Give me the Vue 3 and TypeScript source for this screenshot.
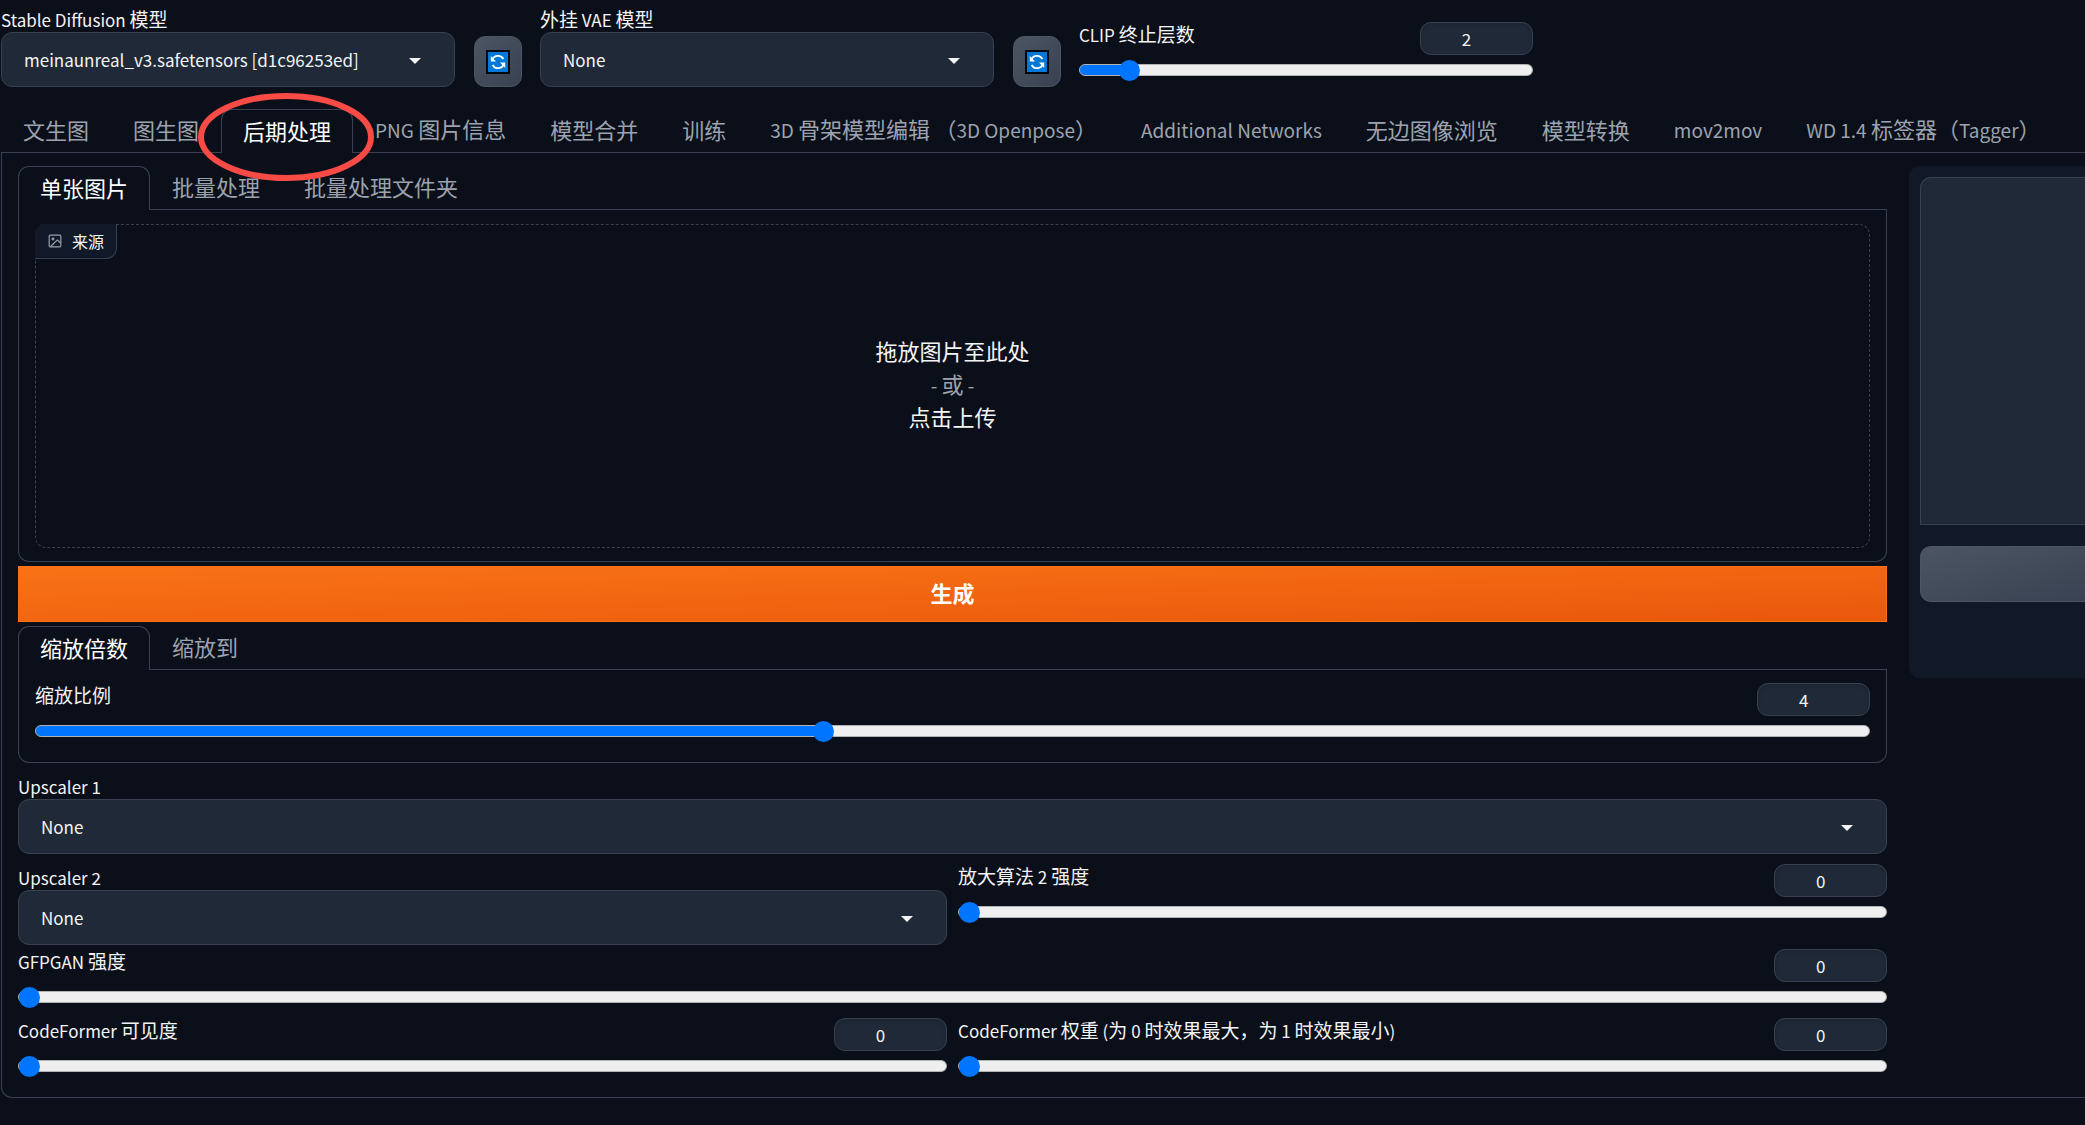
<script setup lang="ts">
import { h, reactive, ref } from 'vue'

interface SliderSpec {
  id: string
  label: string
  value: number
  min: number
  max: number
  step: number
}

const mainTabs = [
  '文生图', '图生图', '后期处理', 'PNG 图片信息', '模型合并', '训练',
  '3D 骨架模型编辑 （3D Openpose）', 'Additional Networks', '无边图像浏览',
  '模型转换', 'mov2mov', 'WD 1.4 标签器（Tagger）',
]
const sourceTabs = ['单张图片', '批量处理', '批量处理文件夹']
const scaleTabs = ['缩放倍数', '缩放到']

const activeMain = ref(2)
const activeSource = ref(0)
const activeScale = ref(0)

const sliders = reactive<Record<string, SliderSpec>>({
  clip: { id: 'clip', label: 'CLIP 终止层数', value: 2, min: 1, max: 12, step: 1 },
  resize: { id: 'resize', label: '缩放比例', value: 4, min: 1, max: 8, step: 0.05 },
  up2: { id: 'up2', label: '放大算法 2 强度', value: 0, min: 0, max: 1, step: 0.001 },
  gfpgan: { id: 'gfpgan', label: 'GFPGAN 强度', value: 0, min: 0, max: 1, step: 0.001 },
  cfVis: { id: 'cf-vis', label: 'CodeFormer 可见度', value: 0, min: 0, max: 1, step: 0.001 },
  cfWeight: { id: 'cf-weight', label: 'CodeFormer 权重 (为 0 时效果最大，为 1 时效果最小)', value: 0, min: 0, max: 1, step: 0.001 },
})

const fill = (s: SliderSpec) => {
  const f = (s.value - s.min) / (s.max - s.min)
  return { '--fill': `calc(${f} * (100% - 21px) + 10px)` }
}

// Mixed-script text: Latin runs are set a little smaller than the Chinese around them.
const Mixed = (props: { text: string }) =>
  h('span', { class: 'mixed' }, props.text.split(/([\x20-\x7e]+)/).filter(Boolean).map(
    part => /^[\x20-\x7e]+$/.test(part) ? h('span', { class: 'latin' }, part) : part,
  ))
Mixed.props = ['text']
</script>

<template>
  <div class="app">
    <header class="quick">
      <div class="field quick-select">
        <label for="ckpt"><Mixed text="Stable Diffusion 模型" /></label>
        <div class="select">
          <select id="ckpt"><option>meinaunreal_v3.safetensors [d1c96253ed]</option></select>
          <svg class="caret" viewBox="0 0 12 6"><path d="M0 0h12L6 6z" /></svg>
        </div>
      </div>
      <button class="refresh" type="button" aria-label="刷新模型">
        <svg viewBox="0 0 24 24">
          <rect x="1" y="1" width="22" height="22" fill="#0078d7" stroke="#05090f" stroke-width="2" />
          <path d="M6 10.5A6.2 6.2 0 0 1 17.4 9M18 13.5A6.2 6.2 0 0 1 6.6 15" fill="none" stroke="#fff" stroke-width="1.8" />
          <path d="M4.8 6v5.4h5.2zM19.2 18v-5.4h-5.2z" fill="#fff" />
        </svg>
      </button>
      <div class="field quick-select">
        <label for="vae"><Mixed text="外挂 VAE 模型" /></label>
        <div class="select">
          <select id="vae"><option>None</option></select>
          <svg class="caret" viewBox="0 0 12 6"><path d="M0 0h12L6 6z" /></svg>
        </div>
      </div>
      <button class="refresh" type="button" aria-label="刷新 VAE">
        <svg viewBox="0 0 24 24">
          <rect x="1" y="1" width="22" height="22" fill="#0078d7" stroke="#05090f" stroke-width="2" />
          <path d="M6 10.5A6.2 6.2 0 0 1 17.4 9M18 13.5A6.2 6.2 0 0 1 6.6 15" fill="none" stroke="#fff" stroke-width="1.8" />
          <path d="M4.8 6v5.4h5.2zM19.2 18v-5.4h-5.2z" fill="#fff" />
        </svg>
      </button>
      <div class="slider quick-slider">
        <div class="slider-head">
          <label for="clip"><Mixed :text="sliders.clip.label" /></label>
          <input v-model.number="sliders.clip.value" class="num" type="text" :aria-label="sliders.clip.label">
        </div>
        <input id="clip" v-model.number="sliders.clip.value" type="range" :min="sliders.clip.min" :max="sliders.clip.max" :step="sliders.clip.step" :style="fill(sliders.clip)">
      </div>
    </header>

    <nav class="tabs main-tabs">
      <button v-for="(t, i) in mainTabs" :key="t" type="button" class="tab" :class="{ active: i === activeMain }" @click="activeMain = i">
        <Mixed :text="t" />
        <svg v-if="i === 2" class="ring" viewBox="0 0 176 88"><ellipse cx="88" cy="44" rx="85" ry="41" /></svg>
      </button>
    </nav>

    <main class="page">
      <section class="left">
        <div class="tabs">
          <button v-for="(t, i) in sourceTabs" :key="t" type="button" class="tab" :class="{ active: i === activeSource }" @click="activeSource = i">{{ t }}</button>
        </div>
        <div class="panel source-panel">
          <button class="drop" type="button">
            <span class="badge">
              <svg viewBox="0 0 24 24" fill="none" stroke="currentColor" stroke-width="2" stroke-linecap="round" stroke-linejoin="round">
                <rect x="2" y="2" width="20" height="20" rx="2" /><circle cx="8.5" cy="8.5" r="1.5" /><path d="M21 15l-5-5L5 21" />
              </svg>
              来源
            </span>
            <span>拖放图片至此处</span>
            <span class="or"><Mixed text="- 或 -" /></span>
            <span>点击上传</span>
          </button>
        </div>

        <button class="generate" type="button">生成</button>

        <div class="tabs">
          <button v-for="(t, i) in scaleTabs" :key="t" type="button" class="tab" :class="{ active: i === activeScale }" @click="activeScale = i">{{ t }}</button>
        </div>
        <div class="panel scale-panel">
          <div class="slider">
            <div class="slider-head">
              <label for="resize"><Mixed :text="sliders.resize.label" /></label>
              <input v-model.number="sliders.resize.value" class="num" type="text" :aria-label="sliders.resize.label">
            </div>
            <input id="resize" v-model.number="sliders.resize.value" type="range" :min="sliders.resize.min" :max="sliders.resize.max" :step="sliders.resize.step" :style="fill(sliders.resize)">
          </div>
        </div>

        <div class="field upscaler">
          <label for="up1"><Mixed text="Upscaler 1" /></label>
          <div class="select">
            <select id="up1"><option>None</option></select>
            <svg class="caret" viewBox="0 0 12 6"><path d="M0 0h12L6 6z" /></svg>
          </div>
        </div>

        <div class="pair upscaler-pair">
          <div class="field">
            <label for="up2-name"><Mixed text="Upscaler 2" /></label>
            <div class="select">
              <select id="up2-name"><option>None</option></select>
              <svg class="caret" viewBox="0 0 12 6"><path d="M0 0h12L6 6z" /></svg>
            </div>
          </div>
          <div class="slider">
            <div class="slider-head">
              <label for="up2"><Mixed :text="sliders.up2.label" /></label>
              <input v-model.number="sliders.up2.value" class="num" type="text" :aria-label="sliders.up2.label">
            </div>
            <input id="up2" v-model.number="sliders.up2.value" type="range" :min="sliders.up2.min" :max="sliders.up2.max" :step="sliders.up2.step" :style="fill(sliders.up2)">
          </div>
        </div>

        <div class="slider face">
          <div class="slider-head">
            <label for="gfpgan"><Mixed :text="sliders.gfpgan.label" /></label>
            <input v-model.number="sliders.gfpgan.value" class="num" type="text" :aria-label="sliders.gfpgan.label">
          </div>
          <input id="gfpgan" v-model.number="sliders.gfpgan.value" type="range" :min="sliders.gfpgan.min" :max="sliders.gfpgan.max" :step="sliders.gfpgan.step" :style="fill(sliders.gfpgan)">
        </div>

        <div class="pair codeformer">
          <div v-for="s in [sliders.cfVis, sliders.cfWeight]" :key="s.id" class="slider">
            <div class="slider-head">
              <label :for="s.id"><Mixed :text="s.label" /></label>
              <input v-model.number="s.value" class="num" type="text" :aria-label="s.label">
            </div>
            <input :id="s.id" v-model.number="s.value" type="range" :min="s.min" :max="s.max" :step="s.step" :style="fill(s)">
          </div>
        </div>
      </section>

      <aside class="result">
        <div class="gallery"></div>
        <button class="send" type="button" aria-label="打开输出目录"></button>
      </aside>
    </main>
  </div>
</template>

<style>
body {
  background: #0b0f19;
}
</style>

<style scoped>
.app {
  min-height: 100vh;
  overflow: hidden;
  box-sizing: border-box;
  padding-left: 1px;
  background: #0b0f19;
  color: #f3f4f6;
  font: 17px/22px "Noto Sans CJK SC", sans-serif;
}
.app *,
.app *::before {
  box-sizing: border-box;
}
button,
input,
select {
  margin: 0;
  font: inherit;
  color: inherit;
}
button {
  cursor: pointer;
}
label {
  font-size: 19px;
  white-space: nowrap;
}
label :deep(.latin) {
  font-size: 17px;
}

/* fields */
.field {
  display: flex;
  flex-direction: column;
  gap: 2px;
  min-width: 0;
}
.field label {
  height: 22px;
}
.select {
  position: relative;
}
.select select {
  display: block;
  width: 100%;
  height: 55px;
  padding: 0 66px 0 22px;
  appearance: none;
  border: 1px solid #374151;
  border-radius: 11px;
  background: #1f2937;
}
.caret {
  position: absolute;
  right: 34px;
  top: 26px;
  width: 12px;
  height: 6px;
  fill: #f3f4f6;
  pointer-events: none;
}
.slider {
  display: flex;
  flex-direction: column;
  gap: 4px;
  min-width: 0;
}
.slider-head {
  display: flex;
  justify-content: space-between;
  align-items: flex-start;
  height: 33px;
}
.slider-head label {
  margin-top: 1px;
}
.num {
  width: 113px;
  height: 33px;
  padding: 0 20px 1px 0;
  border: 1px solid #374151;
  border-radius: 11px;
  background: #1f2937;
  box-shadow: inset 0 2px 4px rgb(0 0 0 / 10%);
  text-align: center;
}
input[type='range'] {
  width: 100%;
  height: 21px;
  appearance: none;
  background: transparent;
}
input[type='range']::-webkit-slider-runnable-track {
  height: 12px;
  border: 1px solid #b2b2b2;
  border-radius: 6px;
  background: linear-gradient(to right, #0075ff var(--fill), #efefef var(--fill)) border-box;
}
input[type='range']::-webkit-slider-thumb {
  width: 21px;
  height: 21px;
  margin-top: -5px;
  appearance: none;
  border-radius: 50%;
  background: #0075ff;
}

/* top row */
.quick {
  display: flex;
  align-items: flex-start;
  padding-top: 8px;
}
.quick-select {
  width: 454px;
}
.refresh {
  width: 48px;
  height: 51px;
  margin: 28px 18px 0 19px;
  padding: 0;
  display: grid;
  place-items: center;
  border: 1px solid #4b5563;
  border-radius: 11px;
  background: linear-gradient(to bottom right, #4b5563, #374151);
}
.refresh svg {
  width: 24px;
  height: 24px;
}
.quick-slider {
  width: 454px;
  padding-top: 14px;
}

/* tabs */
.tabs {
  display: flex;
}
.tabs::after {
  content: '';
  flex: 1;
  border-bottom: 1px solid #374151;
}
.main-tabs {
  margin-top: 22px;
}
.tab {
  position: relative;
  height: 44px;
  padding: 0 22px 3px;
  border: 0;
  border-bottom: 1px solid #374151;
  border-radius: 0;
  background: none;
  color: #9ca3af;
  font-size: 22px;
  line-height: 32px;
  white-space: nowrap;
}
.tab :deep(.latin),
.or :deep(.latin) {
  font-size: 19px;
}
.tab.active {
  padding: 0 21px 4px;
  border: 1px solid #374151;
  border-bottom: 0;
  border-radius: 11px 11px 0 0;
  color: #fff;
}
.ring {
  position: absolute;
  left: -24px;
  top: -17px;
  width: 176px;
  height: 88px;
  z-index: 2;
  fill: none;
  stroke: #f94b46;
  stroke-width: 6px;
}

/* page */
.page {
  display: flex;
  align-items: flex-start;
  gap: 22px;
  margin-right: -22px;
  padding: 13px 0 21px 16px;
  border: 1px solid #374151;
  border-top: 0;
  border-radius: 0 0 11px 11px;
}
.left {
  flex: 1870 1 0;
  min-width: 0;
}
.panel {
  border: 1px solid #374151;
  border-top: 0;
  border-radius: 0 0 11px 11px;
}
.source-panel {
  padding: 14px 16px 13px;
}
.drop {
  position: relative;
  display: flex;
  flex-direction: column;
  align-items: center;
  justify-content: center;
  width: 100%;
  height: 324px;
  padding: 0 0 6px;
  border: 1px dashed #374151;
  border-radius: 11px;
  background: none;
  font-size: 22px;
  line-height: 33px;
}
.or {
  height: 33px;
  color: #9ca3af;
}
.badge {
  position: absolute;
  left: -1px;
  top: -1px;
  display: flex;
  align-items: center;
  gap: 10px;
  height: 35px;
  padding: 0 12px 0 13px;
  border-right: 1px solid #374151;
  border-bottom: 1px solid #374151;
  border-radius: 11px 0 11px;
  background: #111827;
  font-size: 16px;
}
.badge svg {
  width: 14px;
  height: 14px;
  color: #9ca3af;
}
.generate {
  display: block;
  width: 100%;
  height: 56px;
  margin: 4px 0;
  padding: 0 0 4px;
  border: 1px solid #f97316;
  background: linear-gradient(to bottom right, #f97316, #ea580c);
  color: #fff;
  font-size: 22px;
  font-weight: 700;
}
.scale-panel {
  padding: 13px 16px 21px;
}
.upscaler {
  margin-top: 12px;
}
.pair {
  display: grid;
  grid-template-columns: 1fr 1fr;
  gap: 11px;
}
.upscaler-pair {
  margin-top: 10px;
}
.upscaler-pair .field {
  padding-top: 2px;
}
.face {
  margin-top: 4px;
}
.codeformer {
  margin-top: 11px;
}

/* result */
.result {
  flex: 186 1 0;
  min-width: 0;
  height: 512px;
  padding: 11px 0 0 11px;
  border-radius: 11px 0 0 11px;
  background: #111827;
}
.gallery {
  height: 348px;
  border: 1px solid #374151;
  border-right: 0;
  border-radius: 11px 0 0 0;
  background: #1f2937;
}
.send {
  display: block;
  width: 100%;
  height: 56px;
  margin-top: 21px;
  border: 1px solid #4b5563;
  border-right: 0;
  border-radius: 11px 0 0 11px;
  background: linear-gradient(to bottom right, #4b5563, #374151);
}
</style>
